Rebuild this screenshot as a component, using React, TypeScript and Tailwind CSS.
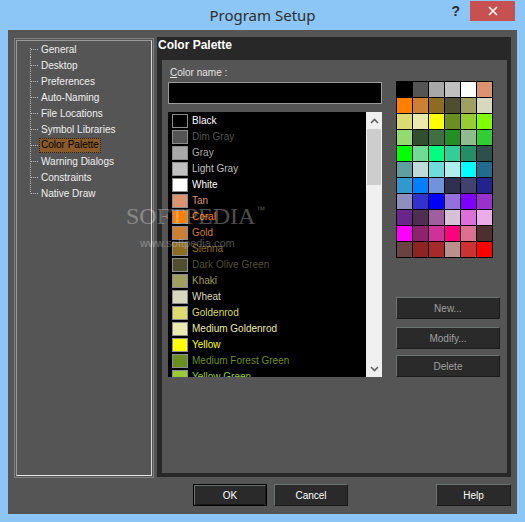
import React from "react";

const palette = [
  "#000000", "#545454", "#a8a8a8", "#c0c0c0", "#ffffff", "#db9370",
  "#ff7f00", "#cd7f32", "#8e6b23", "#4f4f2f", "#9f9f5f", "#d8d8bf",
  "#dbdb70", "#eaeaae", "#ffff00", "#6b8e23", "#99cc32", "#7fff00",
  "#93db70", "#2f4f2f", "#426f42", "#238e23", "#8fbc8f", "#32cd32",
  "#00ff00", "#70db93", "#00ff7f", "#32cd99", "#238e68", "#2f4f4f",
  "#5f9f9f", "#c0d9d9", "#70dbdb", "#afeeee", "#00ffff", "#236b8e",
  "#3299cc", "#007fff", "#7093db", "#2f2f4f", "#42426f", "#23238e",
  "#8f8fbd", "#3232cd", "#0000ff", "#9370db", "#7f00ff", "#9932cd",
  "#6b238e", "#4f2f4f", "#9f5f9f", "#d8bfd8", "#db70db", "#eaadea",
  "#ff00ff", "#8e236b", "#cc3299", "#ff007f", "#db7093", "#4e2f2f",
  "#6b4242", "#8e2323", "#a62a2a", "#bc8f8f", "#cc3232", "#ff0000",
];

const colors: [string, string][] = [
  ["Black", "#000000"],
  ["Dim Gray", "#545454"],
  ["Gray", "#a8a8a8"],
  ["Light Gray", "#c0c0c0"],
  ["White", "#ffffff"],
  ["Tan", "#db9370"],
  ["Coral", "#ff7f00"],
  ["Gold", "#cd7f32"],
  ["Sienna", "#8e6b23"],
  ["Dark Olive Green", "#4f4f2f"],
  ["Khaki", "#9f9f5f"],
  ["Wheat", "#d8d8bf"],
  ["Goldenrod", "#dbdb70"],
  ["Medium Goldenrod", "#eaeaae"],
  ["Yellow", "#ffff00"],
  ["Medium Forest Green", "#6b8e23"],
  ["Yellow Green", "#99cc32"],
];

const tree = [
  "General",
  "Desktop",
  "Preferences",
  "Auto-Naming",
  "File Locations",
  "Symbol Libraries",
  "Color Palette",
  "Warning Dialogs",
  "Constraints",
  "Native Draw",
];

function Connector({ first, last }: { first: boolean; last: boolean }) {
  return (
    <svg width="10" height="16" className="shrink-0">
      <line
        x1="1.5"
        y1={first ? 7 : 0}
        x2="1.5"
        y2={last ? 8.5 : 16}
        stroke="#b8b8b8"
        strokeDasharray="1 1"
      />
      <line x1="2" y1="8.5" x2="9" y2="8.5" stroke="#b8b8b8" strokeDasharray="1 1" />
    </svg>
  );
}

function SideButton({ label, cls }: { label: string; cls: string }) {
  return (
    <div
      className={`w-[104px] h-[22px] flex items-center justify-center bg-[#2a2a2a] border border-t-[#6a7272] border-l-[#6a7272] border-b-[#1a1a1a] border-r-[#1a1a1a] text-[#a0a0a0] text-[10px] ${cls}`}
    >
      {label}
    </div>
  );
}

export default function App() {
  return (
    <div
      className="w-[525px] h-[522px] bg-[#8cc6f7] flex flex-col overflow-hidden"
      style={{ fontFamily: '"Liberation Sans", Arial, sans-serif' }}
    >
      {/* Title bar */}
      <div className="h-[30px] grid grid-cols-[1fr_auto_1fr] shrink-0">
        <div />
        <div
          className="flex items-center text-[15px] text-[#2e2e2e] pt-[1px]"
          style={{ fontFamily: '"Noto Sans", "Open Sans", sans-serif' }}
        >
          Program Setup
        </div>
        <div className="flex justify-end items-start pr-[10px]">
          <div className="mt-[3px] mr-[10px] text-[14px] font-bold text-[#2e2e2e] leading-[16px]">?</div>
          <div className="mt-[1px] w-[45px] h-[20px] bg-[#c75050] flex items-center justify-center">
            <svg width="10" height="10" viewBox="0 0 10 10">
              <path d="M1 1 L9 9 M9 1 L1 9" stroke="#ffffff" strokeWidth="1.6" />
            </svg>
          </div>
        </div>
      </div>

      {/* Content */}
      <div className="relative mx-[8px] mb-[8px] flex-1 bg-[#555555] flex flex-col">
        <div className="flex items-start">
          {/* Tree panel */}
          <div className="ml-[6px] mt-[8px] w-[140px] h-[440px] border border-[#808080] p-px">
            <div className="w-full h-full border border-t-[#9a9a9a] border-l-[#9a9a9a] border-b-[#e8e8e8] border-r-[#d8d8d8] pl-[12px]">
              {tree.map((t, i) => (
                <div key={t} className="flex items-center h-[16px]">
                  <Connector first={i === 0} last={i === tree.length - 1} />
                  {t === "Color Palette" ? (
                    <span className="h-[15px] leading-[14px] px-[2px] bg-[#8b5a2b] text-black text-[10px] outline outline-1 outline-dotted outline-[#222] -outline-offset-1 whitespace-nowrap">
                      {t}
                    </span>
                  ) : (
                    <span className="px-[2px] text-[10px] leading-[15px] text-[#f0f0f0] whitespace-nowrap">{t}</span>
                  )}
                </div>
              ))}
            </div>
          </div>

          {/* Right panel */}
          <div className="ml-[3px] mt-[7px] w-[354px] h-[440px] bg-[#282828] flex flex-col">
            <div className="h-[23px] pl-px leading-[16px] text-[12px] font-bold text-white shrink-0">Color Palette</div>
            <div className="ml-[5px] mr-[4px] h-[413px] bg-[#555555] flex">
              {/* Left column */}
              <div className="ml-[6px] w-[214px] pt-[6px] flex flex-col">
                <div className="h-[14px] leading-[14px] text-[10px] text-[#e4e4e4] pl-[2px]">
                  <span className="underline">C</span>olor name :
                </div>
                <div className="mt-[2px] h-[22px] bg-black border border-[#9a9a9a]" />
                <div className="mt-[8px] h-[265px] bg-black flex overflow-hidden">
                  <div className="flex-1 pt-px pl-[4px] overflow-hidden">
                    {colors.map(([name, c]) => (
                      <div key={name} className="h-[16px] flex items-center">
                        <div className="w-[16px] h-[14px] border border-[#8c8c8c] shrink-0" style={{ backgroundColor: c }} />
                        <span
                          className="ml-[4px] text-[10px] leading-[16px] whitespace-nowrap"
                          style={{ color: name === "Black" ? "#ffffff" : c }}
                        >
                          {name}
                        </span>
                      </div>
                    ))}
                  </div>
                  <div className="w-[16px] bg-[#f0f0f0] flex flex-col items-center">
                    <div className="h-[17px] flex items-center justify-center">
                      <svg width="9" height="6" viewBox="0 0 9 6">
                        <path d="M1 5 L4.5 1.5 L8 5" stroke="#606060" strokeWidth="1.6" fill="none" />
                      </svg>
                    </div>
                    <div className="w-[14px] h-[56px] bg-[#cdcdcd]" />
                    <div className="flex-1" />
                    <div className="h-[17px] flex items-center justify-center">
                      <svg width="9" height="6" viewBox="0 0 9 6">
                        <path d="M1 1 L4.5 4.5 L8 1" stroke="#606060" strokeWidth="1.6" fill="none" />
                      </svg>
                    </div>
                  </div>
                </div>
              </div>

              {/* Right column */}
              <div className="ml-[14px] pt-[21px] flex flex-col">
                <div className="bg-black p-px grid grid-cols-6 gap-px w-[97px]">
                  {palette.map((c, i) => (
                    <div key={i} className="w-[15px] h-[15px]" style={{ backgroundColor: c }} />
                  ))}
                </div>
                <SideButton label="New..." cls="mt-[39px]" />
                <SideButton label="Modify..." cls="mt-[8px]" />
                <SideButton label="Delete" cls="mt-[6px]" />
              </div>
            </div>
          </div>
        </div>

        {/* Bottom buttons */}
        <div className="mt-[6px] flex">
          <div className="ml-[185px] w-[74px] h-[22px] border border-black">
            <div className="w-full h-full bg-[#2a2a2a] border border-t-[#6a7272] border-l-[#6a7272] border-b-[#1a1a1a] border-r-[#1a1a1a] flex items-center justify-center text-white text-[10px]">
              OK
            </div>
          </div>
          <div className="ml-[7px] w-[74px] h-[22px] bg-[#2a2a2a] border border-t-[#6a7272] border-l-[#6a7272] border-b-[#1a1a1a] border-r-[#1a1a1a] flex items-center justify-center text-white text-[10px]">
            Cancel
          </div>
          <div className="ml-[88px] w-[75px] h-[22px] bg-[#2a2a2a] border border-t-[#6a7272] border-l-[#6a7272] border-b-[#1a1a1a] border-r-[#1a1a1a] flex items-center justify-center text-white text-[10px]">
            Help
          </div>
        </div>

        {/* Watermark */}
        <div className="absolute left-[118px] top-[174px] pointer-events-none text-white opacity-30">
          <div className="flex items-start">
            <span className="text-[24px] leading-[24px]" style={{ fontFamily: '"Liberation Serif", serif' }}>
              SOFTPEDIA
            </span>
            <span className="text-[9px] leading-[9px] ml-px mt-[2px]">™</span>
          </div>
        </div>
        <div className="absolute left-[132px] top-[205px] pointer-events-none text-white opacity-30 text-[11px]">
          www.softpedia.com
        </div>
      </div>
    </div>
  );
}
